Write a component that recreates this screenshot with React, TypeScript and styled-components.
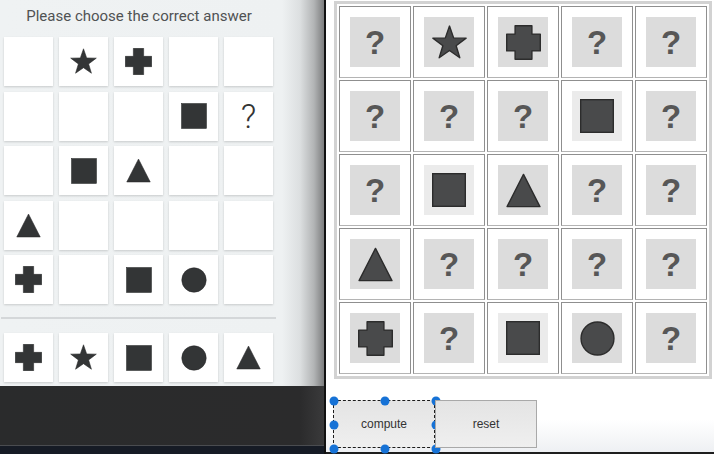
import React from 'react'
import styled, { createGlobalStyle } from 'styled-components'

type Kind = 'star' | 'cross' | 'square' | 'triangle' | 'circle' | 'unknown' | ''

const GlobalStyle = createGlobalStyle`
  body {
    margin: 0;
    background: #ffffff;
    overflow: hidden;
  }
`

// puzzle as the player sees it, '' is an empty tile
const puzzle: Kind[][] = [
  ['', 'star', 'cross', '', ''],
  ['', '', '', 'square', 'unknown'],
  ['', 'square', 'triangle', '', ''],
  ['triangle', '', '', '', ''],
  ['cross', '', 'square', 'circle', ''],
]

const answers: Kind[] = ['cross', 'star', 'square', 'circle', 'triangle']

// solver board, 'unknown' cells are still open
const board: Kind[][] = [
  ['unknown', 'star', 'cross', 'unknown', 'unknown'],
  ['unknown', 'unknown', 'unknown', 'square', 'unknown'],
  ['unknown', 'square', 'triangle', 'unknown', 'unknown'],
  ['triangle', 'unknown', 'unknown', 'unknown', 'unknown'],
  ['cross', 'unknown', 'square', 'circle', 'unknown'],
]

const Page = styled.div`
  display: flex;
  width: 714px;
  height: 454px;
  overflow: hidden;
`

const LeftPanel = styled.div`
  display: flex;
  flex-direction: column;
  width: 324px;
  flex-shrink: 0;
  border-right: 2px solid #111;
  background: linear-gradient(
    to right,
    #eff2f3 0,
    #eef1f2 282px,
    #dcdfe0 300px,
    #b2b4b5 314px,
    #7c7d7e 324px
  );
`

const Title = styled.div`
  margin-top: 6px;
  width: 278px;
  text-align: center;
  font-family: Roboto, 'Liberation Sans', sans-serif;
  font-size: 15px;
  line-height: 20px;
  color: #505253;
`

const TileGrid = styled.div<{ $top: number }>`
  display: grid;
  grid-template-columns: repeat(5, 49px);
  grid-auto-rows: 49px;
  column-gap: 6px;
  row-gap: 5.5px;
  margin-top: ${({ $top }) => $top}px;
  padding-left: 4px;
`

const Tile = styled.div`
  display: flex;
  align-items: center;
  justify-content: center;
  background: #ffffff;
  box-shadow: 0 1px 2px rgba(0, 0, 0, 0.16);
`

const Mystery = styled.span`
  font-family: Roboto, 'Liberation Sans', sans-serif;
  font-weight: 300;
  font-size: 34px;
  line-height: 1;
  color: #333;
`

const Divider = styled.div`
  margin: 13px 0 0 1px;
  width: 275px;
  height: 2px;
  background: #d4d7d9;
`

const Footer = styled.div`
  flex: 1;
  margin-top: 4px;
  display: flex;
  flex-direction: column;
  justify-content: flex-end;
  background: linear-gradient(to right, #2a2b2c 0, #2b2b2c 300px, #3a3a3b 324px);
`

const FooterEdge = styled.div`
  height: 8px;
  border-top: 1px solid #4a4c50;
  background: #161b25;
`

const RightPanel = styled.div`
  flex: 1;
  display: flex;
  flex-direction: column;
  padding: 1px 0 0 8px;
  border-bottom: 2px solid #1e1e1e;
  background: linear-gradient(to bottom, #ffffff 0, #ffffff 420px, #eef0f3 452px);
`

const Board = styled.div`
  display: grid;
  grid-template-columns: repeat(5, 72px);
  grid-auto-rows: 72px;
  gap: 2px;
  padding: 2px;
  width: fit-content;
  border: 3px solid #d2d2d2;
`

const Cell = styled.div`
  display: flex;
  align-items: center;
  justify-content: center;
  border: 1px solid #8f8f8f;
  border-bottom-color: #b4b4b4;
  background: #ffffff;
`

const Swatch = styled.div<{ $light?: boolean }>`
  display: flex;
  align-items: center;
  justify-content: center;
  width: 50px;
  height: 50px;
  background: ${({ $light }) => ($light ? '#ebebeb' : '#dcdcdc')};
`

const Unknown = styled.span`
  font-family: 'Liberation Sans', Arial, sans-serif;
  font-weight: 700;
  font-size: 33px;
  line-height: 1;
  color: #575757;
`

const Toolbar = styled.div`
  display: flex;
  margin: 21px 0 0 -1px;
`

const ActionButton = styled.button<{ $selected?: boolean }>`
  position: relative;
  width: 102px;
  height: 48px;
  padding: 0;
  border: 1px ${({ $selected }) => ($selected ? 'dashed #1c1c1c' : 'solid #a9a9a9')};
  background: linear-gradient(to bottom, #e4e4e4, #efefef);
  font-family: 'Liberation Sans', Arial, sans-serif;
  font-size: 12px;
  color: #333;
`

// selection handles sit on the dashed border line itself
const Handle = styled.span<{ $x: number; $y: number }>`
  position: absolute;
  left: calc(${({ $x }) => $x}% + ${({ $x }) => ($x / 100) * 2 - 0.5}px);
  top: calc(${({ $y }) => $y}% + ${({ $y }) => ($y / 100) * 2 - 0.5}px);
  width: 9px;
  height: 9px;
  border-radius: 50%;
  background: #1672d6;
  transform: translate(-50%, -50%);
`

const starPoints =
  '50,3 61.8,36.8 97.5,37.5 69,59.2 79.4,93.5 50,73 20.6,93.5 31,59.2 2.5,37.5 38.2,36.8'

const Shape = ({ kind, size, solid }: { kind: Kind; size: number; solid?: boolean }) => {
  const fill = solid ? '#333536' : '#494a4b'
  const stroke = solid ? '#242526' : '#2c2c2c'
  const sw = solid ? 2 : 4
  return (
    <svg width={size} height={size} viewBox="0 0 100 100">
      {kind === 'star' && <polygon points={starPoints} fill={fill} stroke={stroke} strokeWidth={sw} strokeLinejoin="round" />}
      {kind === 'cross' &&
        (solid ? (
          <path d="M31 1h38v30h30v38H69v30H31V69H1V31h30z" fill={fill} stroke={stroke} strokeWidth={sw} />
        ) : (
          <path d="M26 2h48v24h24v48H74v24H26V74H2V26h24z" fill={fill} stroke={stroke} strokeWidth={sw} strokeLinejoin="round" />
        ))}
      {kind === 'square' && <rect x={2} y={2} width={96} height={96} fill={fill} stroke={stroke} strokeWidth={sw} />}
      {kind === 'circle' && <circle cx={50} cy={50} r={47} fill={fill} stroke={stroke} strokeWidth={sw} />}
      {kind === 'triangle' && <polygon points="50,4 97,96 3,96" fill={fill} stroke={stroke} strokeWidth={sw} strokeLinejoin="round" />}
    </svg>
  )
}

const tileSize: Record<string, number> = { star: 27, cross: 27, square: 26, circle: 26, triangle: 25 }
const cellSize: Record<string, number> = { star: 35, cross: 35, square: 34, circle: 35, triangle: 35 }

const PuzzleTile = ({ kind }: { kind: Kind }) => (
  <Tile>
    {kind === 'unknown' && <Mystery>?</Mystery>}
    {kind && kind !== 'unknown' && <Shape kind={kind} size={tileSize[kind]} solid />}
  </Tile>
)

const BoardCell = ({ kind }: { kind: Kind }) => (
  <Cell>
    <Swatch $light={kind === 'square'}>
      {kind === 'unknown' ? <Unknown>?</Unknown> : <Shape kind={kind} size={cellSize[kind]} />}
    </Swatch>
  </Cell>
)

const handles = [
  [0, 0], [50, 0], [100, 0],
  [0, 50], [100, 50],
  [0, 100], [50, 100], [100, 100],
]

const App = () => {
  return (
    <Page>
      <GlobalStyle />
      <LeftPanel>
        <Title>Please choose the correct answer</Title>
        <TileGrid $top={11}>
          {puzzle.flat().map((kind, i) => (
            <PuzzleTile key={i} kind={kind} />
          ))}
        </TileGrid>
        <Divider />
        <TileGrid $top={14}>
          {answers.map((kind, i) => (
            <PuzzleTile key={i} kind={kind} />
          ))}
        </TileGrid>
        <Footer>
          <FooterEdge />
        </Footer>
      </LeftPanel>
      <RightPanel>
        <Board>
          {board.flat().map((kind, i) => (
            <BoardCell key={i} kind={kind} />
          ))}
        </Board>
        <Toolbar>
          <ActionButton $selected>
            compute
            {handles.map(([x, y]) => (
              <Handle key={`${x}-${y}`} $x={x} $y={y} />
            ))}
          </ActionButton>
          <ActionButton>reset</ActionButton>
        </Toolbar>
      </RightPanel>
    </Page>
  )
}

export default App
